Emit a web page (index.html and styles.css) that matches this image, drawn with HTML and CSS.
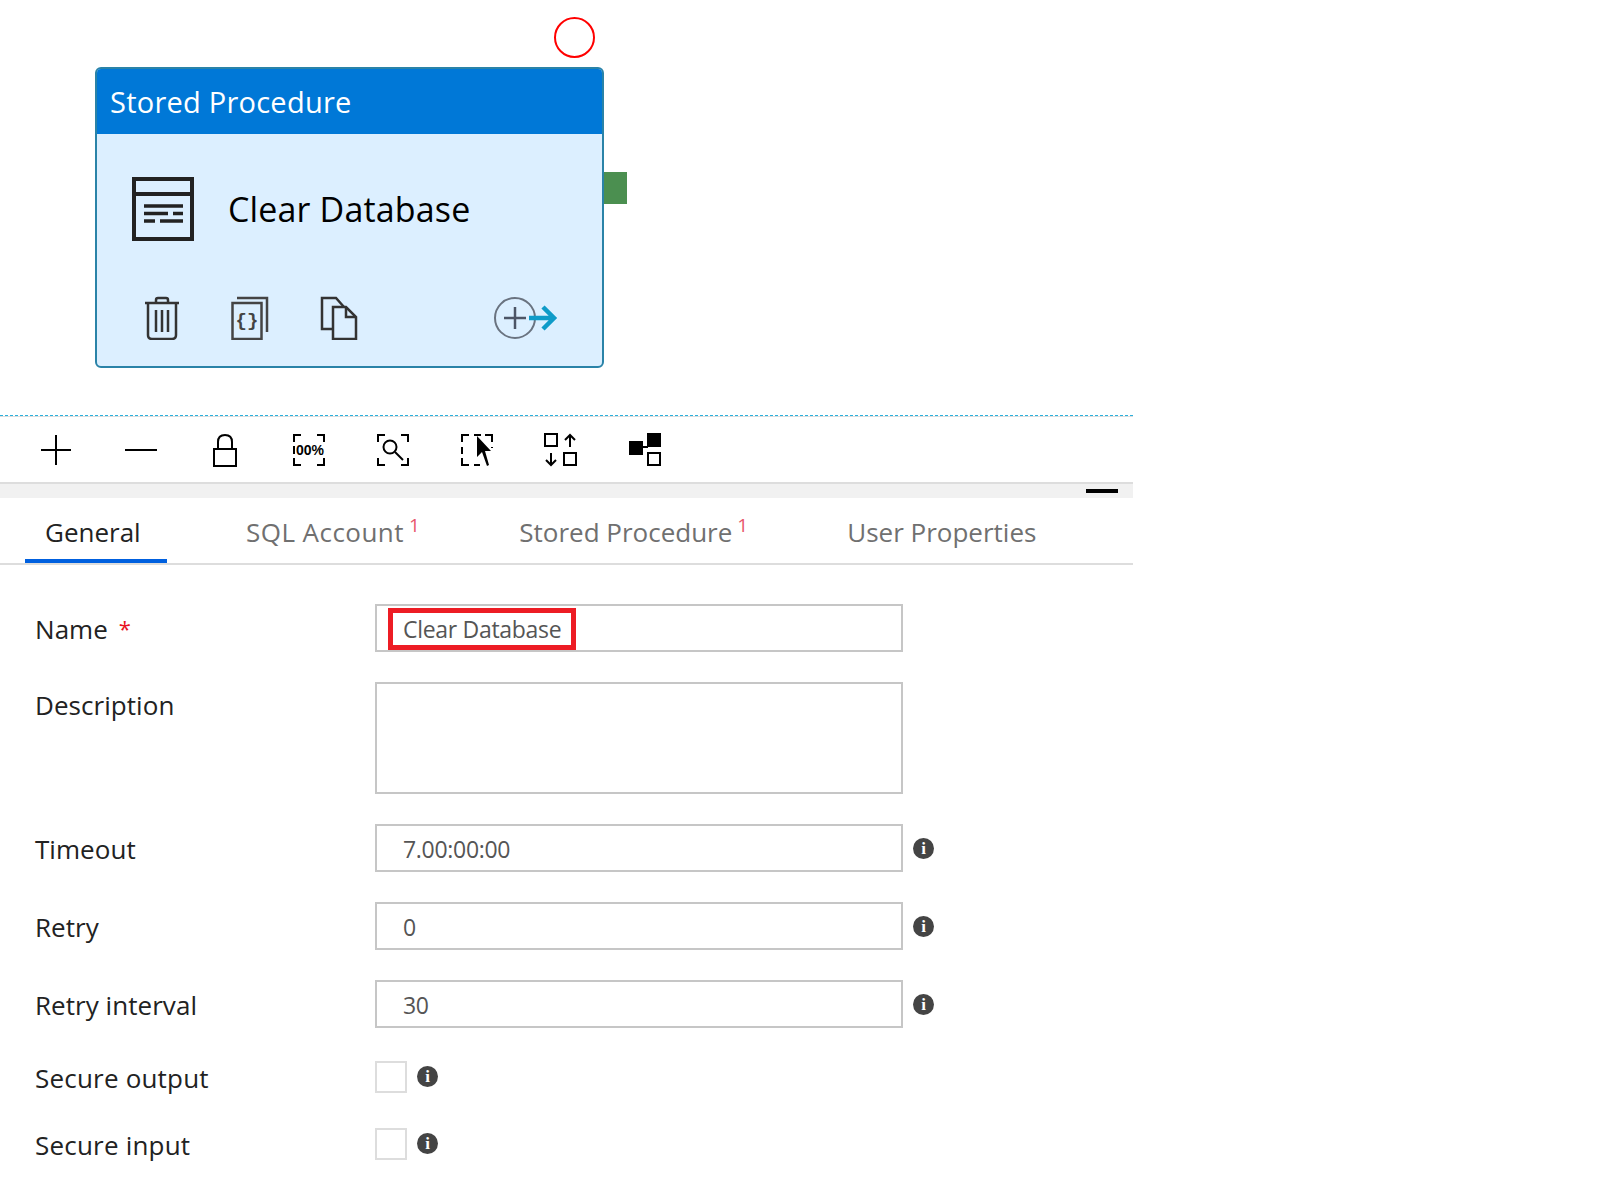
FILE: index.html
```html
<!DOCTYPE html>
<html lang="en">
<head>
    <meta charset="UTF-8">
    <title>Stored Procedure</title>
    <link rel="stylesheet" href="styles.css">
</head>
<body>
    <div class="page">
        <div class="canvas">
            <div class="circle"></div>
            <div class="card">
                <div class="card-head">Stored Procedure</div>
                <div class="card-main">
                    <svg class="proc-icon" width="62" height="64" viewBox="0 0 62 64" fill="none" stroke="#222" stroke-width="4">
                        <rect x="2" y="2" width="58" height="60"/>
                        <path d="M2 17H60"/>
                        <path stroke-width="3.5" d="M12 29H51M12 36.500H36M41 36.500H51M12 44H23M28 44H51"/>
                    </svg>
                    <span class="card-name">Clear Database</span>
                </div>
                <div class="card-actions">
                    <svg width="36" height="44" viewBox="0 0 36 44" fill="none" stroke="#333" stroke-width="2.500">
                        <path d="M1 7H35M4 7V39Q4 43 8 43H28Q32 43 32 39V7M12 7V4Q12 2 14 2H22Q24 2 24 4V7"/>
                        <path d="M12 14V36M18 14V36M24 14V36"/>
                    </svg>
                    <svg class="act-code" width="38" height="44" viewBox="0 0 38 44" fill="none" stroke="#444" stroke-width="2.500">
                        <path d="M6 2H36V36"/>
                        <rect x="1.500" y="7" width="29" height="36"/>
                        <text x="16" y="29.500" font-family="Liberation Mono" font-size="19" font-weight="700" fill="#444" stroke="none" text-anchor="middle">{}</text>
                    </svg>
                    <svg class="act-copy" width="38" height="44" viewBox="0 0 38 44" fill="none" stroke="#333" stroke-width="2.500">
                        <path d="M13 33H2V2H16L24 11"/>
                        <path d="M13 11H26L36 21V43H13Z"/>
                        <path d="M26 11V21H36"/>
                    </svg>
                    <svg class="act-add" width="66" height="44" viewBox="0 0 66 44" fill="none">
                        <circle cx="22" cy="22" r="20" stroke="#6a7380" stroke-width="2"/>
                        <path d="M11 22H33M22 11V33" stroke="#4c5566" stroke-width="2.500"/>
                        <path d="M36 22H61M50 11L61 22L50 33" stroke="#0f9bc8" stroke-width="4.500"/>
                    </svg>
                </div>
            </div>
            <div class="port"></div>
        </div>

        <div class="toolbar">
            <svg width="34" height="34" viewBox="0 0 34 34" fill="none" stroke="#000" stroke-width="2"><path d="M1 17H31M16 2V32"/></svg>
            <svg width="34" height="34" viewBox="0 0 34 34" fill="none" stroke="#000" stroke-width="2"><path d="M1 17H33"/></svg>
            <svg width="34" height="34" viewBox="0 0 34 34" fill="none" stroke="#000" stroke-width="2"><rect x="6" y="16" width="22" height="17"/><path d="M10 16V9Q10 2 17 2Q24 2 24 9V16"/></svg>
            <svg width="34" height="34" viewBox="0 0 34 34" fill="none" stroke="#000" stroke-width="2">
                <path d="M2 9V2H9M25 2H32V9M2 25V32H9M25 32H32V25"/>
                <path d="M2 13V21"/>
                <text x="18" y="22" font-family="Liberation Sans" font-size="14" font-weight="700" fill="#000" stroke="none" text-anchor="middle">00%</text>
            </svg>
            <svg width="34" height="34" viewBox="0 0 34 34" fill="none" stroke="#000" stroke-width="2">
                <path d="M2 9V2H9M25 2H32V9M2 25V32H9M25 32H32V25"/>
                <circle cx="14" cy="14" r="6.500"/><path d="M19 19L27 27"/>
            </svg>
            <svg width="34" height="34" viewBox="0 0 34 34" fill="none" stroke="#000" stroke-width="2">
                <path d="M2 9V2H9M14 2H21M25 2H32V9M2 14V21M2 25V32H9M14 32H20M32 14V15"/>
                <path d="M17 3V24L22 19L27 33L29 32L25 18H31Z" fill="#000" stroke="none"/>
            </svg>
            <svg width="34" height="34" viewBox="0 0 34 34" fill="none" stroke="#000" stroke-width="2">
                <rect x="1" y="1" width="12" height="12"/><rect x="20" y="20" width="12" height="12"/>
                <path d="M26 14V2M21 7L26 2L31 7M7 20V32M2 27L7 32L12 27"/>
            </svg>
            <svg width="34" height="34" viewBox="0 0 34 34" fill="none" stroke="#000" stroke-width="2">
                <rect x="1" y="8" width="14" height="14" fill="#000" stroke="none"/>
                <rect x="19" y="0" width="14" height="14" fill="#000" stroke="none"/>
                <path d="M14 14H20"/>
                <rect x="20" y="20" width="12" height="12"/>
            </svg>
        </div>

        <div class="splitter"><span class="splitter-handle"></span></div>

        <div class="tabs">
            <div class="tab tab-active">General</div>
            <div class="tab tab-sql">SQL Account<sup>1</sup></div>
            <div class="tab">Stored Procedure<sup>1</sup></div>
            <div class="tab">User Properties</div>
        </div>

        <form class="form" action="">
            <label class="lbl">Name <span class="req">*</span></label>
            <div class="field field-name">
                <div class="input">Clear Database</div>
                <div class="mark"></div>
            </div>

            <label class="lbl lbl-desc">Description</label>
            <div class="field"><div class="input area"></div></div>

            <label class="lbl">Timeout</label>
            <div class="field"><div class="input">7.00:00:00</div><span class="info">i</span></div>

            <label class="lbl">Retry</label>
            <div class="field"><div class="input">0</div><span class="info">i</span></div>

            <label class="lbl">Retry interval</label>
            <div class="field"><div class="input">30</div><span class="info">i</span></div>

            <label class="lbl lbl-check">Secure output</label>
            <div class="field"><div class="check"></div><span class="info">i</span></div>

            <label class="lbl lbl-check">Secure input</label>
            <div class="field"><div class="check"></div><span class="info">i</span></div>
        </form>
    </div>
</body>
</html>
```

FILE: styles.css
```css
* {
    box-sizing: border-box;
}
body {
    margin: 0;
    background: #fff;
    font-family: "Open Sans", "Noto Sans", sans-serif;
}
.page {
    width: 1133px;
}
.canvas {
    position: relative;
    height: 415px;
    padding: 67px 0 0 95px;
}
.circle {
    position: absolute;
    left: 554px;
    top: 17px;
    width: 41px;
    height: 41px;
    border: 2.5px solid #f00;
    border-radius: 50%;
}
.port {
    position: absolute;
    left: 604px;
    top: 172px;
    width: 23px;
    height: 32px;
    background: #4b8f50;
}
.card {
    width: 509px;
    height: 301px;
    background: #dcefff;
    border: 2px solid #2a83a8;
    border-radius: 6px;
    overflow: hidden;
}
.card-head {
    height: 65px;
    padding-left: 13px;
    background: #0078d7;
    color: #fff;
    font-size: 29px;
    line-height: 66px;
    letter-spacing: 0.24px;
}
.card-main {
    display: flex;
    align-items: center;
    height: 149px;
    padding: 0 0 0 35px;
}
.card-name {
    margin-left: 34px;
    font-size: 34px;
    letter-spacing: 0.15px;
    color: #000;
}
.card-actions {
    display: flex;
    align-items: center;
    height: 66px;
    margin-top: 2px;
    padding-left: 47px;
}
.act-code {
    margin-left: 51px;
}
.act-copy {
    margin-left: 51px;
}
.act-add {
    margin-left: 135px;
}

.toolbar {
    display: flex;
    align-items: center;
    gap: 50px;
    height: 69px;
    padding: 2px 0 0 40px;
    border-top: 1px dashed #2bb0dc;
    border-bottom: 2px solid #ddd;
    box-shadow: inset 0 1px #ddd;
}
.splitter {
    display: flex;
    justify-content: flex-end;
    height: 14px;
    padding: 5px 15px 0 0;
    background: #f1f1f1;
}
.splitter-handle {
    width: 32px;
    height: 4px;
    background: #000;
}

.tabs {
    display: flex;
    gap: 59px;
    height: 67px;
    padding-left: 25px;
    border-bottom: 2px solid #ddd;
}
.tab {
    height: 65px;
    padding: 0 20px;
    font-size: 26px;
    line-height: 68px;
    color: #707070;
}
.tab sup {
    margin-left: 5px;
    font-size: 19px;
    line-height: 0;
    color: #e8566c;
}
.tab-sql {
    letter-spacing: 0.45px;
}
.tab-active {
    width: 142px;
    color: #222;
    border-bottom: 4px solid #0060df;
}

.form {
    display: grid;
    grid-template-columns: 340px 1fr;
    padding: 38px 0 0 35px;
    row-gap: 30px;
}
.lbl {
    padding-top: 2px;
    font-size: 26px;
    letter-spacing: 0.05px;
    color: #222;
    line-height: 46px;
}
.lbl-desc {
    padding-top: 0;
}
.lbl-check {
    padding-top: 4px;
    letter-spacing: 0.2px;
    line-height: 33px;
}
.req {
    margin-left: 4px;
    font-size: 22px;
    vertical-align: 2px;
    color: #e81123;
}
.field {
    display: flex;
    align-items: center;
    gap: 10px;
}
.field-name {
    position: relative;
}
.input {
    width: 528px;
    height: 48px;
    padding-left: 26px;
    border: 2px solid #c6c6c6;
    font-size: 23px;
    line-height: 46px;
    letter-spacing: -0.3px;
    color: #555;
}
.area {
    height: 112px;
}
.mark {
    position: absolute;
    left: 13px;
    top: 5px;
    width: 188px;
    height: 42px;
    border: 5px solid #ed1c24;
}
.info {
    width: 21px;
    height: 21px;
    border-radius: 50%;
    background: #444;
    color: #fff;
    font-family: "Liberation Serif", serif;
    font-size: 17px;
    font-weight: 700;
    line-height: 21px;
    text-align: center;
}
.check {
    width: 32px;
    height: 32px;
    border: 2px solid #ddd;
}
```
